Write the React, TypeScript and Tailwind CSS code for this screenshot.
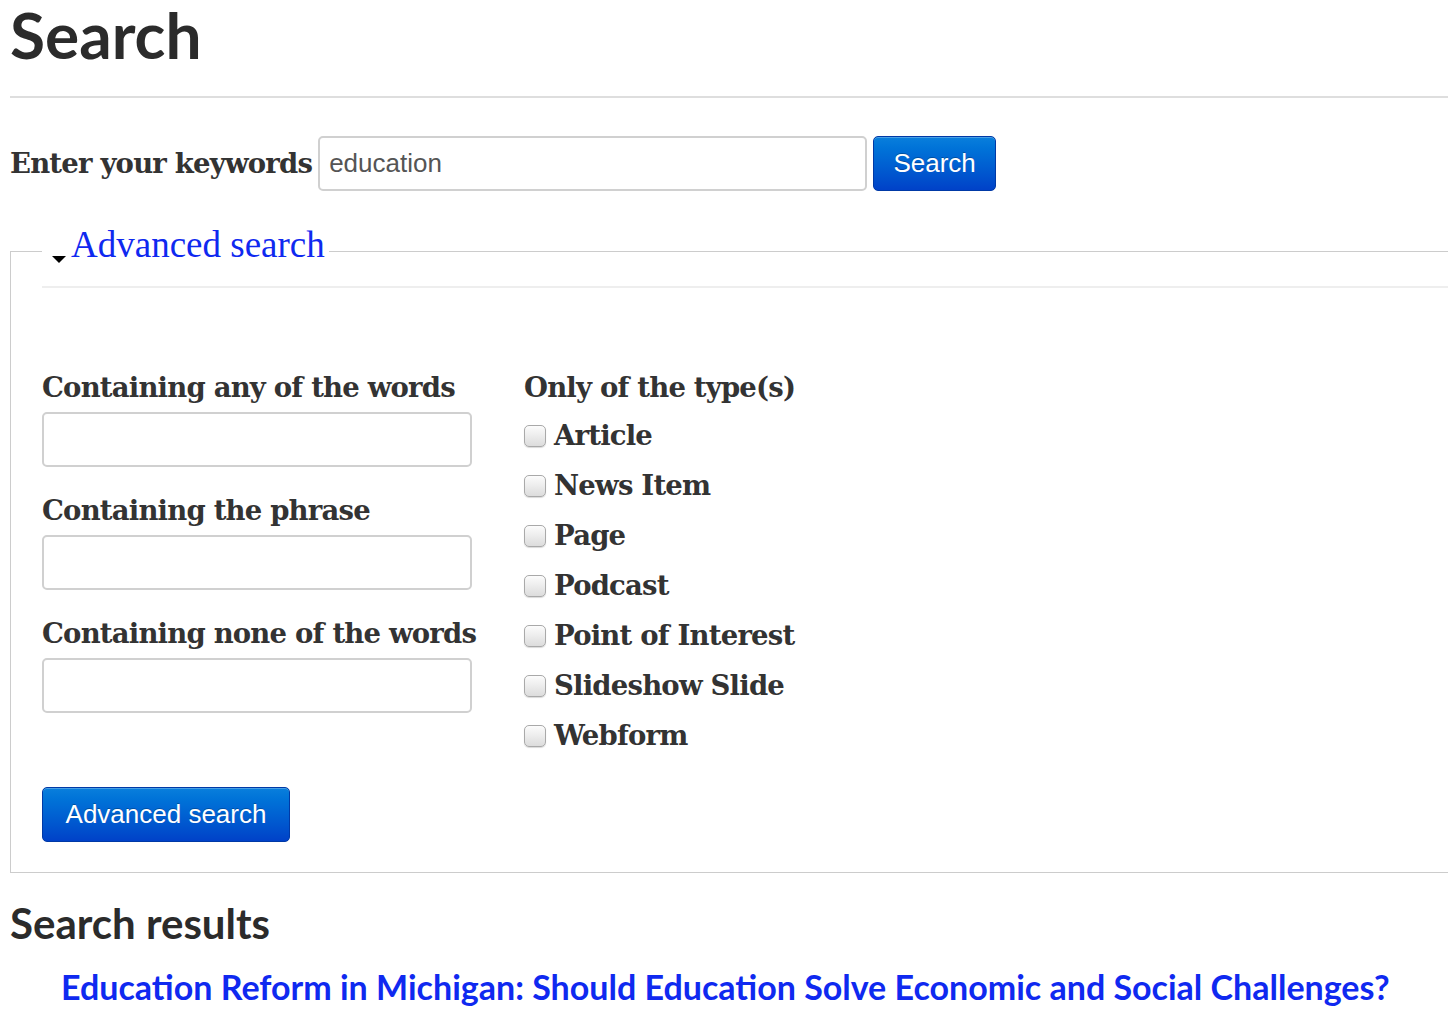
import React from 'react'

const slab = { fontFamily: '"DejaVu Serif", serif', letterSpacing: '-0.8px' }
const sans = { fontFamily: 'Lato, "Noto Sans", sans-serif' }
const helv = { fontFamily: '"Liberation Sans", Arial, sans-serif' }

const types = ['Article', 'News Item', 'Page', 'Podcast', 'Point of Interest', 'Slideshow Slide', 'Webform']

const fields = ['Containing any of the words', 'Containing the phrase', 'Containing none of the words']

function BlueButton({ label, className = '' }: { label: string; className?: string }) {
  return (
    <button
      className={`h-[55px] rounded-[5px] border border-[#0039a6] bg-gradient-to-b from-[#0a7fdc] to-[#0041c8] text-[26px] text-white shadow-[inset_0_1px_0_rgba(255,255,255,0.25)] ${className}`}
      style={{ ...helv, textShadow: '0 -1px 0 rgba(0,0,0,0.25)' }}
    >
      {label}
    </button>
  )
}

function Checkbox() {
  return (
    <span className="inline-block h-[22px] w-[22px] shrink-0 rounded-[5px] border border-[#a9a9a9] bg-gradient-to-b from-[#fcfcfc] to-[#dcdcdc] shadow-[0_1px_1px_rgba(0,0,0,0.15)]" />
  )
}

export default function App() {
  return (
    <div className="w-[1448px] overflow-hidden bg-white text-[#333]">
      <div className="w-[1500px] pl-[10px]">
        <h1 className="text-[64px] font-bold leading-[70px] text-[#2b2b2b]" style={sans}>
          Search
        </h1>
        <div className="mt-[26px] h-[2px] bg-[#dedede]" />

        <div className="mt-[38px] flex items-center gap-[6px]">
          <label className="text-[27.5px] font-bold text-[#333]" style={slab}>
            Enter your keywords
          </label>
          <div
            className="flex h-[55px] w-[549px] items-center rounded-[5px] border-2 border-[#d0d0d0] px-[9px] text-[26px] text-[#555]"
            style={helv}
          >
            education
          </div>
          <BlueButton label="Search" className="w-[123px]" />
        </div>

        <fieldset className="mt-[40px] border border-[#cccccc] border-r-0 pb-[30px] pl-[31px]">
          <legend className="flex items-end pr-[4px]">
            <svg width="24" height="12" viewBox="0 0 24 12" className="relative top-[-6px] ml-[10px]">
              <polygon points="0,3 14,3 7,10" fill="#000" />
            </svg>
            <span
              className="relative top-[-6px] -ml-[5px] text-[37px] leading-[40px] text-[#0f29f0]"
              style={{ fontFamily: '"Liberation Serif", serif' }}
            >
              Advanced search
            </span>
          </legend>

          <div className="mt-[15px] h-[2px] bg-[#eeeeee]" />

          <div className="mt-[81px] flex">
            <div className="w-[482px]">
              {fields.map((f, i) => (
                <div key={f} className={i > 0 ? 'mt-[25px]' : ''}>
                  <div className="text-[27.5px] font-bold leading-[36px] text-[#333]" style={slab}>
                    {f}
                  </div>
                  <div className="mt-[7px] h-[55px] w-[430px] rounded-[5px] border-2 border-[#d0d0d0]" />
                </div>
              ))}
              <BlueButton label="Advanced search" className="mt-[74px] w-[248px]" />
            </div>

            <div>
              <div className="text-[27.5px] font-bold leading-[36px] text-[#333]" style={slab}>
                Only of the type(s)
              </div>
              <div className="mt-[6px] flex flex-col">
                {types.map((t) => (
                  <div key={t} className="flex h-[50px] items-center gap-[8px]">
                    <Checkbox />
                    <span className="text-[27.5px] font-bold text-[#333]" style={slab}>
                      {t}
                    </span>
                  </div>
                ))}
              </div>
            </div>
          </div>
        </fieldset>

        <h2 className="mt-[26px] text-[42px] font-bold leading-[48px] text-[#2b2b2b]" style={sans}>
          Search results
        </h2>
        <div className="mt-[20px] pl-[51px]">
          <a className="text-[34px] font-bold leading-[40px] text-[#0f29f0]" style={sans}>
            Education Reform in Michigan: Should Education Solve Economic and Social Challenges?
          </a>
        </div>
      </div>
    </div>
  )
}
